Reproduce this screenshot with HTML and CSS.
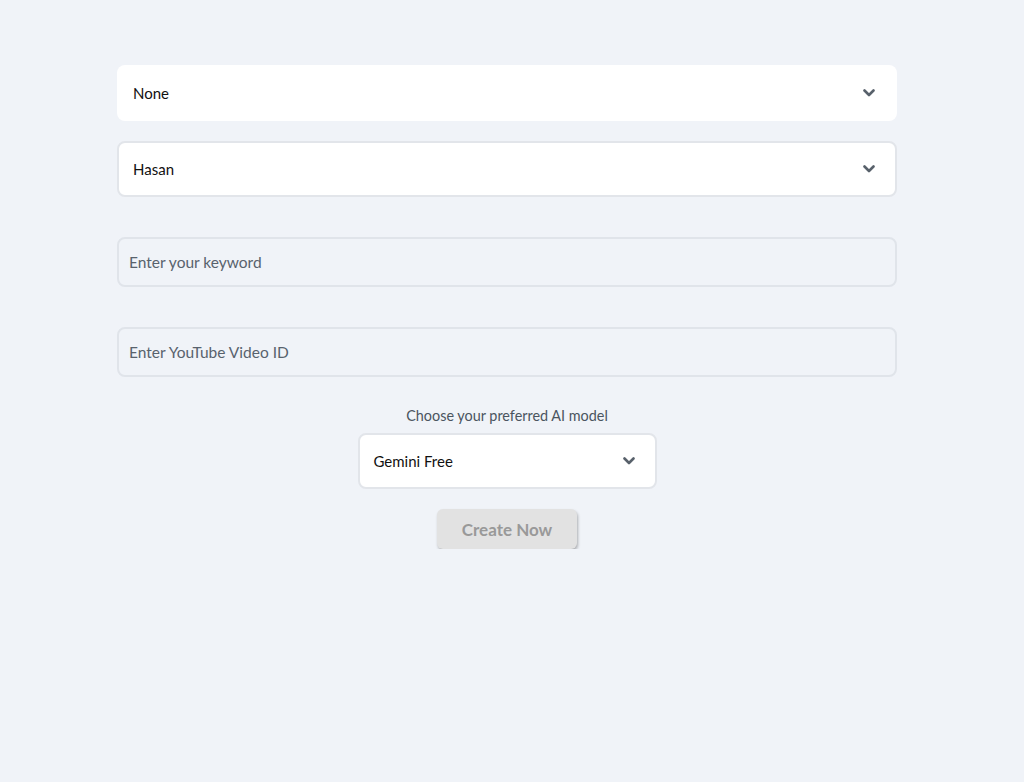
FILE: index.html
```html
<!DOCTYPE html>
<html>
<head>
    <title>Create</title>
    <link rel="stylesheet" href="styles.css">
</head>
<body>
    <div class="container">
        <div class="select plain">
            <span>None</span>
            <svg class="chevron" viewBox="0 0 12 8"><path d="M1.5 1.5L6 6l4.5-4.5"/></svg>
        </div>

        <div class="select bordered">
            <span>Hasan</span>
            <svg class="chevron" viewBox="0 0 12 8"><path d="M1.5 1.5L6 6l4.5-4.5"/></svg>
        </div>

        <input type="text" class="field" placeholder="Enter your keyword">

        <input type="text" class="field" placeholder="Enter YouTube Video ID">

        <div class="model-section">
            <label class="model-label">Choose your preferred AI model</label>
            <div class="select bordered model">
                <span>Gemini Free</span>
                <svg class="chevron" viewBox="0 0 12 8"><path d="M1.5 1.5L6 6l4.5-4.5"/></svg>
            </div>
            <button class="create" disabled>Create Now</button>
        </div>
    </div>
</body>
</html>
```

FILE: styles.css
```css
body {
    margin: 0;
    background-color: #f0f3f8;
    font-family: Lato, "Noto Sans", sans-serif;
    color: #111;
}
.container {
    width: 780px;
    margin-left: 117px;
    padding-top: 65px;
    display: flex;
    flex-direction: column;
}
.select {
    height: 56px;
    box-sizing: border-box;
    background-color: #fff;
    border-radius: 8px;
    display: flex;
    align-items: center;
    justify-content: space-between;
    padding: 0 22px 0 16px;
    font-size: 15px;
}
.select.bordered {
    border: 2px solid #e2e5ea;
    padding: 0 20px 0 14px;
}
.plain {
    margin-bottom: 20px;
}
.chevron {
    width: 12px;
    height: 8px;
    fill: none;
    stroke: #58616b;
    stroke-width: 2.6;
    stroke-linecap: round;
    stroke-linejoin: round;
}
.field {
    margin-top: 40px;
    height: 50px;
    box-sizing: border-box;
    border: 2px solid #e0e4ea;
    border-radius: 8px;
    background-color: #f0f3f8;
    padding: 0 10px;
    font-family: inherit;
    font-size: 15.5px;
    color: #333;
}
.field::placeholder {
    color: #58626d;
}
.field:focus {
    outline: none;
}
.model-section {
    margin-top: 30px;
    display: flex;
    flex-direction: column;
    align-items: center;
}
.model-label {
    font-size: 14.4px;
    color: #4b5560;
    margin-bottom: 9px;
}
.select.model {
    width: 299px;
}
.create {
    margin-top: 20px;
    width: 140px;
    height: 40px;
    border: none;
    border-radius: 6px;
    background-color: #e2e2e2;
    color: #999;
    font-family: inherit;
    font-weight: bold;
    font-size: 17px;
    box-shadow: 1px 2px 3px rgba(0, 0, 0, 0.28);
}
```
